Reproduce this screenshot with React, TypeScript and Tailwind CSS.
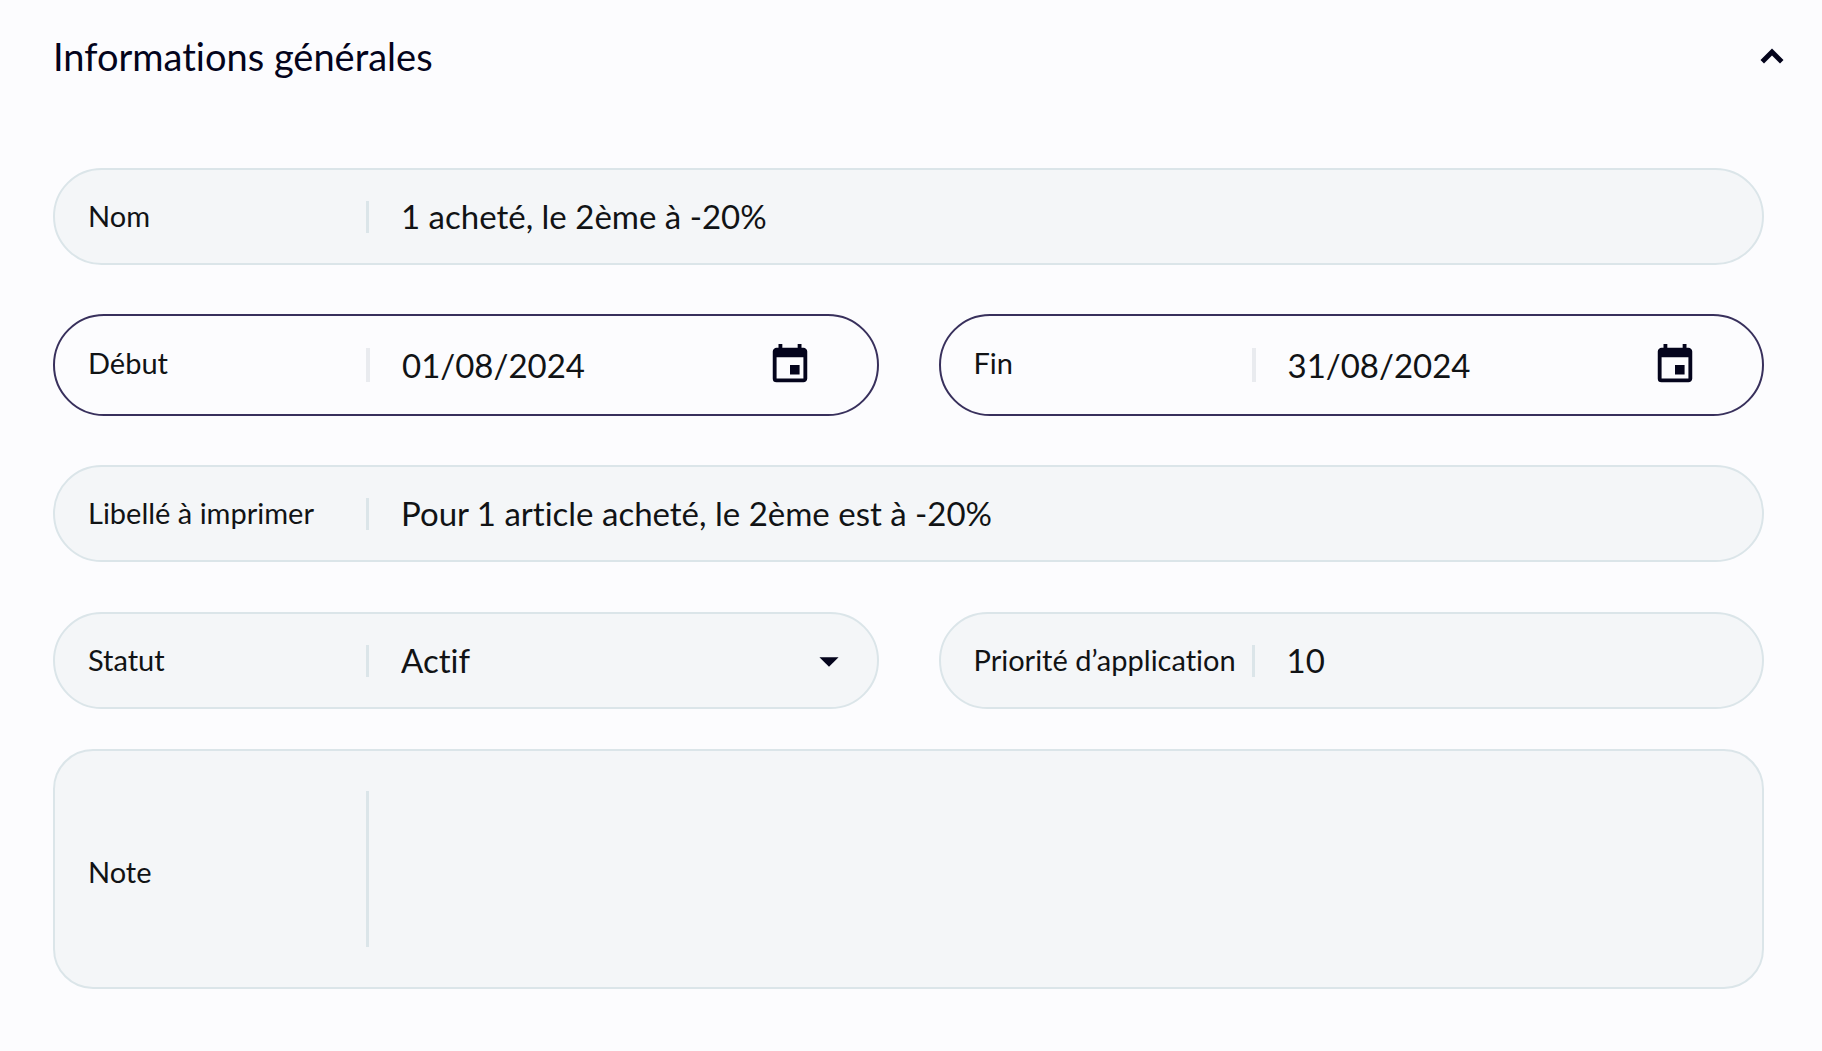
import { useState, type ReactNode } from "react";
import { MdArrowDropDown, MdEvent } from "react-icons/md";

const pill =
  "flex items-center rounded-full border-2 border-[#dbe5e9] bg-[#f4f6f8] pl-[33px] h-[97px]";
const datePill =
  "flex items-center rounded-full border-2 border-[#38305c] bg-[#fcfcfe] pl-[33px] h-[102px]";
const control =
  "min-w-0 flex-1 self-stretch bg-transparent pl-8 text-[33px] leading-10 text-[#111315] outline-none";

function Label({ htmlFor, className = "pb-0.5", children }: { htmlFor: string; className?: string; children: ReactNode }) {
  return (
    <label htmlFor={htmlFor} className={`w-[278px] shrink-0 whitespace-nowrap text-[29px] leading-8 ${className}`}>
      {children}
    </label>
  );
}

function Divider() {
  return <span className="h-8 w-[3px] shrink-0 bg-[#dbe5e9]" />;
}

function TextField({ id, label, value }: { id: string; label: string; value: string }) {
  return (
    <div className={pill}>
      <Label htmlFor={id}>{label}</Label>
      <Divider />
      <input id={id} type="text" defaultValue={value} className={`${control} rounded-r-full pr-8 pb-0.5`} />
    </div>
  );
}

function DateField({ id, label, value }: { id: string; label: string; value: string }) {
  return (
    <div className={datePill}>
      <Label htmlFor={id} className="pb-1">
        {label}
      </Label>
      <span className="h-[34px] w-1 shrink-0 bg-[#e9ebef]" />
      <input id={id} type="text" inputMode="numeric" defaultValue={value} className={control} />
      <button type="button" aria-label={`Choisir la date : ${label}`} className="mr-16 shrink-0 text-[#04041c]">
        <MdEvent size={46} />
      </button>
    </div>
  );
}

export default function App() {
  const [open, setOpen] = useState(true);
  return (
    <main className="min-h-screen bg-[#fcfcfe] pt-8 pr-[58px] pb-[60px] pl-[53px] font-['Lato',sans-serif] text-[#111315] [font-variant-ligatures:none]">
      <header className="-mr-7 flex h-12 items-center justify-between text-[#04041c]">
        <h1 className="text-[38px] leading-12">Informations générales</h1>
        <button
          type="button"
          aria-label="Replier la section"
          aria-expanded={open}
          onClick={() => setOpen(!open)}
          className="p-2"
        >
          <svg viewBox="0 0 24 16" className="h-4 w-6" fill="currentColor">
            <path d="M12 .5 23.5 12 20 15.5l-8-8-8 8L.5 12z" />
          </svg>
        </button>
      </header>
      {open && (
        <form className="mt-[88px]">
          <div className="flex flex-col gap-[49px]">
            <TextField id="nom" label="Nom" value="1 acheté, le 2ème à -20%" />
            <div className="grid grid-cols-2 gap-[60px]">
              <DateField id="debut" label="Début" value="01/08/2024" />
              <DateField id="fin" label="Fin" value="31/08/2024" />
            </div>
            <div className="flex flex-col gap-[50px]">
              <TextField id="libelle" label="Libellé à imprimer" value="Pour 1 article acheté, le 2ème est à -20%" />
              <div className="grid grid-cols-2 gap-[60px]">
                <div className={pill}>
                  <Label htmlFor="statut">Statut</Label>
                  <Divider />
                  <div className="relative flex min-w-0 flex-1 items-center self-stretch">
                    <select
                      id="statut"
                      defaultValue="Actif"
                      className={`${control} appearance-none rounded-r-full pr-20 pb-0.5`}
                    >
                      <option>Actif</option>
                      <option>Inactif</option>
                    </select>
                    <MdArrowDropDown size={46} className="pointer-events-none absolute right-[25px] text-[#04041c]" />
                  </div>
                </div>
                <TextField id="priorite" label="Priorité d’application" value="10" />
              </div>
            </div>
          </div>
          <div className="mt-10 flex h-60 items-center rounded-[40px] border-2 border-[#dbe5e9] bg-[#f4f6f8] pl-[33px]">
            <Label htmlFor="note" className="pt-1.5">
              Note
            </Label>
            <span className="h-[156px] w-[3px] shrink-0 bg-[#dbe5e9]" />
            <textarea id="note" className={`${control} resize-none rounded-r-[38px] py-10 pr-8`} />
          </div>
        </form>
      )}
    </main>
  );
}
